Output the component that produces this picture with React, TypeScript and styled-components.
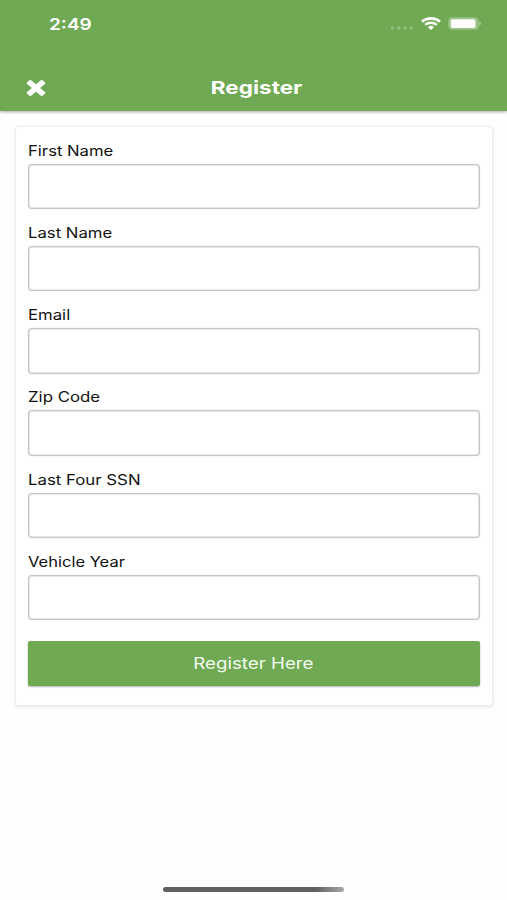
import React from "react";
import styled, { createGlobalStyle } from "styled-components";

const GlobalStyle = createGlobalStyle`
  *, *::before, *::after { box-sizing: border-box; }
  body {
    margin: 0;
    background: #fefefe;
    font-family: Inter, "Liberation Sans", sans-serif;
    color: #111;
  }
`;

const Screen = styled.div`
  height: 900px;
  display: flex;
  flex-direction: column;
  overflow: hidden;
`;

const Header = styled.header`
  height: 111px;
  flex: none;
  background: #6fa953;
  color: #fff;
  box-shadow: 0 1px 3px rgba(0, 0, 0, 0.35);
`;

const StatusBar = styled.div`
  height: 47px;
  padding: 0 25px 0 49px;
  display: flex;
  align-items: center;
  justify-content: space-between;
`;

const StatusIcons = styled.div`
  display: flex;
  align-items: center;
`;

const NavBar = styled.div`
  height: 64px;
  padding: 0 18px 0 25px;
  display: grid;
  grid-template-columns: 22px 1fr 22px;
  align-items: center;
`;

const CloseButton = styled.button`
  display: flex;
  margin: 18px 0 0;
  padding: 0;
  border: 0;
  background: none;
`;

const Wide = styled.span<{ $scale: number; $origin?: string }>`
  display: inline-block;
  white-space: nowrap;
  transform: scaleX(${(p) => p.$scale});
  transform-origin: ${(p) => p.$origin ?? "left"} center;
`;

const Time = styled.div`
  font-size: 16px;
  font-weight: 600;
  line-height: 20px;
`;

const Title = styled.h1`
  margin: 17px 0 0;
  font-size: 18px;
  font-weight: 700;
  line-height: 24px;
  text-align: center;
`;

const Card = styled.form`
  flex: none;
  margin: 15px 14px 0 15px;
  height: 580px;
  padding: 12px 12px 0;
  background: #fff;
  border: 1px solid #ededed;
  border-top-color: #f2ebe8;
  border-radius: 3px;
  box-shadow: 0 1px 3px rgba(0, 0, 0, 0.1);
`;

const Field = styled.label`
  display: block;
  height: 82.3px;
`;

const FieldName = styled.div`
  height: 24.5px;
  padding-top: 0.6px;
  font-size: 14px;
  line-height: 22px;
`;

const Input = styled.input`
  display: block;
  width: 100%;
  height: 45.5px;
  padding: 0 12px;
  border: 1px solid #c6c6c6;
  border-radius: 4px;
  background: #fff;
  box-shadow: inset 0 0 0 1px #e8e8e8, 0 0 1px #c0c0c0;
  font: inherit;
  outline: none;
`;

const Submit = styled.button`
  display: block;
  width: 100%;
  height: 45px;
  margin: 8px 0 0;
  padding: 0 2px 0 0;
  border: 0;
  border-radius: 2px;
  background: #6fa953;
  color: #f4fbf0;
  font-family: inherit;
  font-size: 16px;
  line-height: 45px;
  box-shadow: 0 1px 2px rgba(0, 0, 0, 0.3);
`;

const HomeIndicator = styled.div`
  width: 181px;
  height: 5px;
  margin: auto auto 8px 163px;
  border-radius: 3px;
  background: linear-gradient(90deg, #606060 0 84%, #a8a8a8 100%);
`;

const fields = [
  { name: "First Name", scale: 1.19 },
  { name: "Last Name", scale: 1.195 },
  { name: "Email", scale: 1.195 },
  { name: "Zip Code", scale: 1.2 },
  { name: "Last Four SSN", scale: 1.2 },
  { name: "Vehicle Year", scale: 1.18 },
];

const CloseIcon = () => (
  <svg width="22" height="18" viewBox="0 0 22 18" fill="#fff">
    <g transform="translate(11 9) scale(1.17 1) rotate(45)">
      <rect x="-9.5" y="-2.6" width="19" height="5.2" rx="1.4" />
      <rect x="-2.6" y="-9.5" width="5.2" height="19" rx="1.4" />
    </g>
  </svg>
);

const SignalDots = () => (
  <svg width="24" height="4" viewBox="0 0 24 4" fill="#fff" opacity="0.26">
    <circle cx="2.5" cy="2" r="1.7" />
    <circle cx="8.8" cy="2" r="1.7" />
    <circle cx="15.1" cy="2" r="1.7" />
    <circle cx="21.4" cy="2" r="1.7" />
  </svg>
);

const Wifi = () => (
  <svg width="20" height="13" viewBox="0 0 20 13" fill="none" stroke="#fff">
    <path d="M1 4.7C6 0.3 14 0.3 19 4.7" strokeWidth="2.6" />
    <path d="M4.2 7.9C7.5 5.1 12.5 5.1 15.8 7.9" strokeWidth="2.4" />
    <path d="M6.9 10.2C8.7 8.4 11.3 8.4 13.1 10.2L10 12.9Z" fill="#fff" stroke="none" />
  </svg>
);

const Battery = () => (
  <svg width="34" height="13" viewBox="0 0 34 13">
    <rect x="0.7" y="0.7" width="29.6" height="11.6" rx="3.6" fill="#fff" fillOpacity="0.25" stroke="#fff" strokeOpacity="0.22" strokeWidth="1.2" />
    <rect x="2.8" y="2.3" width="24.7" height="8.6" rx="1.6" fill="#fff" />
    <path d="M31.4 4.4C33.2 5 33.2 8 31.4 8.6Z" fill="#fff" fillOpacity="0.5" />
  </svg>
);

const SignalSlot = styled.span`
  display: flex;
  padding-top: 8px;
  margin-right: 7px;
`;

const WifiSlot = styled.span`
  display: flex;
  margin-right: 7px;
`;

export default function App() {
  return (
    <>
      <GlobalStyle />
      <Screen>
        <Header>
          <StatusBar>
            <Time>
              <Wide $scale={1.19}>2:49</Wide>
            </Time>
            <StatusIcons>
              <SignalSlot>
                <SignalDots />
              </SignalSlot>
              <WifiSlot>
                <Wifi />
              </WifiSlot>
              <Battery />
            </StatusIcons>
          </StatusBar>
          <NavBar>
            <CloseButton type="button" aria-label="Close">
              <CloseIcon />
            </CloseButton>
            <Title>
              <Wide $scale={1.25} $origin="center">Register</Wide>
            </Title>
          </NavBar>
        </Header>
        <Card>
          {fields.map((f) => (
            <Field key={f.name}>
              <FieldName>
                <Wide $scale={f.scale}>{f.name}</Wide>
              </FieldName>
              <Input type="text" />
            </Field>
          ))}
          <Submit type="button">
            <Wide $scale={1.17} $origin="center">Register Here</Wide>
          </Submit>
        </Card>
        <HomeIndicator />
      </Screen>
    </>
  );
}
